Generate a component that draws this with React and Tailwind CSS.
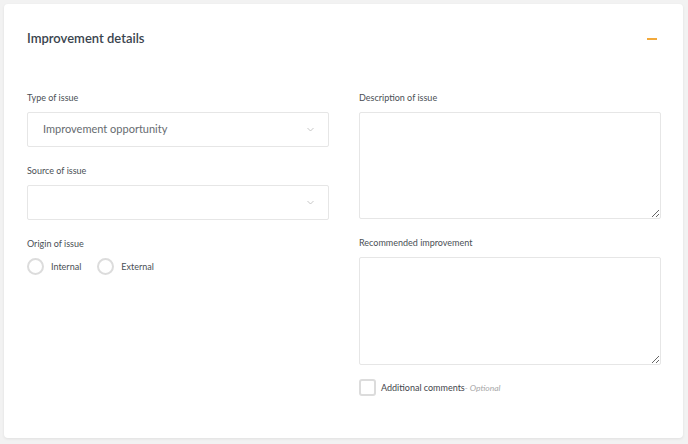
import React from 'react';

function Label({ children, className = '' }) {
  return (
    <div className={`text-[9px] leading-[11px] text-[#4a4f55] mb-[9px] ${className}`}>{children}</div>
  );
}

function SelectBox({ value }) {
  return (
    <div className="h-[35px] border border-[#e6e6e6] rounded-[2px] bg-white flex items-center justify-between pl-[15px] pr-[14px]">
      <span className="text-[11px] text-[#666b70]">{value}</span>
      <svg width="7" height="5" viewBox="0 0 7 5" className="text-[#b9b9b9]">
        <path d="M0.5 1 L3.5 4 L6.5 1" fill="none" stroke="currentColor" strokeWidth="0.8" />
      </svg>
    </div>
  );
}

function Radio({ label }) {
  return (
    <label className="flex items-center gap-[7px]">
      <span className="w-[17px] h-[17px] rounded-full border-2 border-[#dcdcdc] bg-white" />
      <span className="text-[9px] text-[#4a4f55]">{label}</span>
    </label>
  );
}

export default function App() {
  return (
    <div className="w-[688px] h-[444px] bg-[#f2f2f2] p-[4px] pr-[5px] pb-[6px]" style={{ fontFamily: 'Lato, "Open Sans", sans-serif' }}>
      <div className="h-full bg-white rounded-[4px] shadow-[0_1px_3px_rgba(0,0,0,0.08)] px-[23px] pr-[22px] pt-[26px]">
        {/* Header */}
        <div className="flex items-center justify-between h-[18px]">
          <h2 className="text-[13px] font-semibold text-[#3a444e]">Improvement details</h2>
          <span className="w-[10px] h-[1.5px] bg-[#f2a93b] mr-[4px]" />
        </div>

        <div className="grid grid-cols-2 gap-x-[30px] mt-[44px]">
          {/* Left column */}
          <div>
            <Label>Type of issue</Label>
            <SelectBox value="Improvement opportunity" />
            <Label className="mt-[18px]">Source of issue</Label>
            <SelectBox value="" />
            <Label className="mt-[18px]">Origin of issue</Label>
            <div className="flex items-center gap-[16px] mt-[4px]">
              <Radio label="Internal" />
              <Radio label="External" />
            </div>
          </div>

          {/* Right column */}
          <div>
            <Label>Description of issue</Label>
            <textarea className="block w-full h-[107px] border border-[#e6e6e6] rounded-[2px] resize-y outline-none" />
            <Label className="mt-[18px]">Recommended improvement</Label>
            <textarea className="block w-full h-[108px] border border-[#e6e6e6] rounded-[2px] resize-y outline-none" />
            <div className="flex items-center gap-[5px] mt-[14px]">
              <span className="w-[17px] h-[17px] rounded-[3px] border-2 border-[#dcdcdc] bg-white" />
              <span className="text-[9px] text-[#3f454b]">
                Additional comments<span className="italic text-[#a8a8a8] text-[8.5px]">- Optional</span>
              </span>
            </div>
          </div>
        </div>
      </div>
    </div>
  );
}
